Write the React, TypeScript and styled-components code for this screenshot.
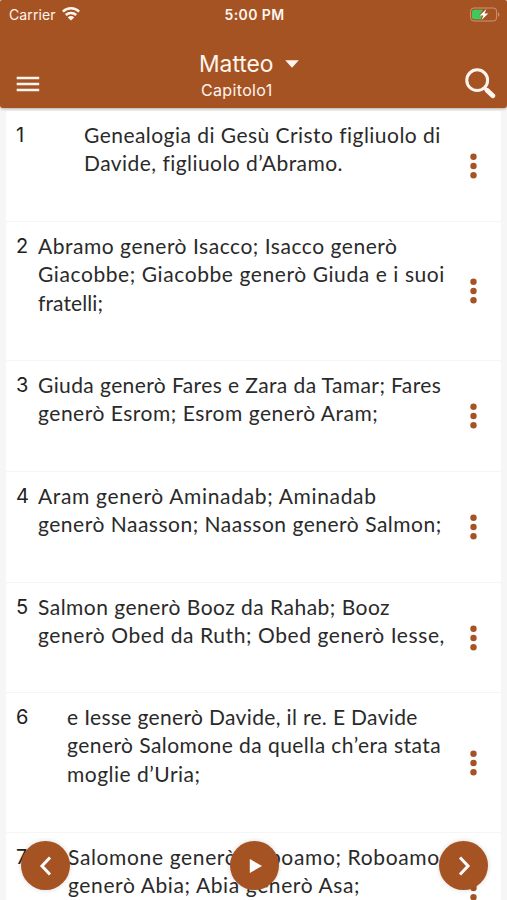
import styled, { createGlobalStyle } from "styled-components";

const BRAND = '#a65324'

const GlobalStyle = createGlobalStyle`
  * {
    box-sizing: border-box;
  }
  body {
    margin: 0;
    background: #f6f6f6;
    overflow: hidden;
  }
`

const Screen = styled.div`
  position: relative;
  width: 507px;
  height: 900px;
  overflow: hidden;
  background: #f6f6f6;
  font-family: Inter, 'Liberation Sans', sans-serif;
`

const Header = styled.header`
  height: 108px;
  color: #fff5ee;
  background: ${BRAND};
  border-radius: 2px 2px 3px 3px;
  box-shadow: 0 1px 3px rgba(90, 70, 50, 0.4);
`

const StatusBar = styled.div`
  display: grid;
  grid-template-columns: 1fr auto 1fr;
  align-items: center;
  height: 28px;
  padding: 0 7px 0 9px;
`

const Carrier = styled.div`
  display: flex;
  align-items: center;
  gap: 6px;
  font-size: 14px;
  letter-spacing: 0.1px;
`

const Clock = styled.div`
  font-size: 14px;
  font-weight: 600;
  letter-spacing: 0.4px;
`

const Battery = styled.svg`
  justify-self: end;
`

const NavBar = styled.div`
  display: flex;
  justify-content: space-between;
  height: 80px;
  padding: 0 11px 0 16px;
`

const NavButton = styled.button<{ $top: number }>`
  display: flex;
  align-items: flex-start;
  width: 64px;
  padding: ${({ $top }) => $top}px 0 0;
  border: 0;
  color: inherit;
  background: none;
`

const SearchButton = styled(NavButton)`
  justify-content: flex-end;
`

const Heading = styled.div`
  width: 114px;
  padding-top: 21px;
`

const Book = styled.div`
  display: flex;
  align-items: center;
  gap: 11px;
  height: 29px;
  font-size: 22.8px;
  white-space: nowrap;
`

const Chapter = styled.div`
  padding-left: 2px;
  font-size: 16px;
  line-height: 25px;
  letter-spacing: 0.35px;
`

const VerseList = styled.main`
  margin: 3px 6px 0;
`

const VerseRow = styled.article<{ $height: number }>`
  display: flex;
  height: ${({ $height }) => $height}px;
  padding: 10px 24px 0 10px;
  background: #fff;
  border-bottom: 1px solid #f5f5f5;
  border-radius: 2px;
`

const VerseNumber = styled.div<{ $width: number }>`
  flex: none;
  width: ${({ $width }) => $width}px;
  font-size: 20px;
  line-height: 28px;
  color: #222;
`

const VerseText = styled.div`
  flex: 1;
  font-family: Lato, 'Open Sans', sans-serif;
  font-size: 21px;
  line-height: 28.3px;
  color: #2a2a2a;
  white-space: nowrap;
`

const Line = styled.div<{ $spacing: number }>`
  letter-spacing: ${({ $spacing }) => $spacing}px;
`

const MoreButton = styled.button`
  display: flex;
  align-self: center;
  margin-top: -10px;
  padding: 0;
  border: 0;
  color: ${BRAND};
  background: none;
`

const Controls = styled.nav`
  position: absolute;
  right: 19px;
  bottom: 10px;
  left: 21px;
  display: flex;
  justify-content: space-between;
`

const RoundButton = styled.button`
  display: flex;
  align-items: center;
  justify-content: center;
  width: 49px;
  height: 49px;
  padding: 0;
  border: 0;
  border-radius: 50%;
  color: #fff;
  background: ${BRAND};
  box-shadow: 0 0 5px rgba(0, 0, 0, 0.16);
`

type Verse = {
  id: number
  height: number
  indent: number
  lines: [string, number][]
}

// each line carries its own tracking
const verses: Verse[] = [
  { id: 1, height: 111, indent: 68, lines: [['Genealogia di Gesù Cristo figliuolo di', 0.46], ['Davide, figliuolo d’Abramo.', 0.45]] },
  { id: 2, height: 139, indent: 22, lines: [['Abramo generò Isacco; Isacco generò', 0.53], ['Giacobbe; Giacobbe generò Giuda e i suoi', 0.58], ['fratelli;', 0.1]] },
  { id: 3, height: 111, indent: 22, lines: [['Giuda generò Fares e Zara da Tamar; Fares', 0.4], ['generò Esrom; Esrom generò Aram;', 0.52]] },
  { id: 4, height: 111, indent: 22, lines: [['Aram generò Aminadab; Aminadab', 0.67], ['generò Naasson; Naasson generò Salmon;', 0.51]] },
  { id: 5, height: 110, indent: 22, lines: [['Salmon generò Booz da Rahab; Booz', 0.48], ['generò Obed da Ruth; Obed generò Iesse,', 0.58]] },
  { id: 6, height: 140, indent: 51, lines: [['e Iesse generò Davide, il re. E Davide', 0.34], ['generò Salomone da quella ch’era stata', 0.44], ['moglie d’Uria;', 0.5]] },
  { id: 7, height: 111, indent: 52, lines: [['Salomone generò Roboamo; Roboamo', 0.64], ['generò Abia; Abia generò Asa;', 0.61]] },
]

const VerseItem = ({ verse }: { verse: Verse }) => (
  <VerseRow $height={verse.height}>
    <VerseNumber $width={verse.indent}>{verse.id}</VerseNumber>
    <VerseText>
      {verse.lines.map(([text, spacing]) => <Line key={text} $spacing={spacing}>{text}</Line>)}
    </VerseText>
    <MoreButton aria-label="Altro">
      <svg width="7" height="26" viewBox="0 0 7 26" fill="currentColor">
        <circle cx="3.5" cy="3.7" r="3.2" />
        <circle cx="3.5" cy="13" r="3.2" />
        <circle cx="3.5" cy="22.3" r="3.2" />
      </svg>
    </MoreButton>
  </VerseRow>
)

const App = () => {
  return (
    <Screen>
      <GlobalStyle />
      <Header>
        <StatusBar>
          <Carrier>
            Carrier
            <svg width="18" height="14" viewBox="0 0 18 14" fill="none" stroke="currentColor" strokeWidth="2.5">
              <path d="M.9 4.6a11.6 11.6 0 0 1 16.2 0M3.8 8a7.5 7.5 0 0 1 10.4 0" />
              <path d="M9 13.6 5.8 10.4a4.6 4.6 0 0 1 6.4 0Z" fill="currentColor" stroke="none" />
            </svg>
          </Carrier>
          <Clock>5:00 PM</Clock>
          <Battery width="30" height="15" viewBox="0 0 30 15">
            <rect x=".6" y="1" width="26" height="13" rx="3.2" fill="none" stroke="#cd9576" />
            <path d="M28 5q2.8 2.5 0 5Z" fill="#cd9576" />
            <path d="M4 2.8h9L9 8.6h3l-1 3.6H4a2 2 0 0 1-2-2V4.8a2 2 0 0 1 2-2Z" fill="#3ecb5b" />
            <path d="M16.4 2 9.6 8.4h3.8L11.6 13l6.6-6.4h-3.7Z" fill="#fff" />
          </Battery>
        </StatusBar>
        <NavBar>
          <NavButton $top={48} aria-label="Menu">
            <svg width="24" height="16" viewBox="0 0 24 16" stroke="currentColor" strokeWidth="2.4">
              <path d="M.7 2h22.5M.7 8h22.5M.7 14h22.5" />
            </svg>
          </NavButton>
          <Heading>
            <Book>
              Matteo
              <svg width="14" height="8" viewBox="0 0 14 8" fill="currentColor">
                <path d="M.2.3h13.6L7 7.8Z" />
              </svg>
            </Book>
            <Chapter>Capitolo1</Chapter>
          </Heading>
          <SearchButton $top={40} aria-label="Cerca">
            <svg width="31" height="31" viewBox="0 0 31 31" fill="none" stroke="currentColor" strokeLinecap="round">
              <circle cx="12.2" cy="12.2" r="10.4" strokeWidth="3" />
              <path d="m20 20.2 1.5 1.5" strokeWidth="3" />
              <path d="m22 22.2 5.8 5.6" strokeWidth="4.8" />
            </svg>
          </SearchButton>
        </NavBar>
      </Header>
      <VerseList>
        {verses.map((verse) => <VerseItem key={verse.id} verse={verse} />)}
      </VerseList>
      <Controls>
        <RoundButton aria-label="Precedente">
          <svg width="14" height="20" viewBox="0 0 14 20" fill="none" stroke="currentColor" strokeWidth="3">
            <path d="M11 1.5 3 10l8 8.5" />
          </svg>
        </RoundButton>
        <RoundButton aria-label="Riproduci">
          <svg width="16" height="16" viewBox="0 0 16 16" fill="currentColor">
            <path d="M2.8 1 15 8 2.8 15Z" />
          </svg>
        </RoundButton>
        <RoundButton aria-label="Successivo">
          <svg width="14" height="20" viewBox="0 0 14 20" fill="none" stroke="currentColor" strokeWidth="3">
            <path d="m3 1.5 8 8.5-8 8.5" />
          </svg>
        </RoundButton>
      </Controls>
    </Screen>
  );
};

export default App;
